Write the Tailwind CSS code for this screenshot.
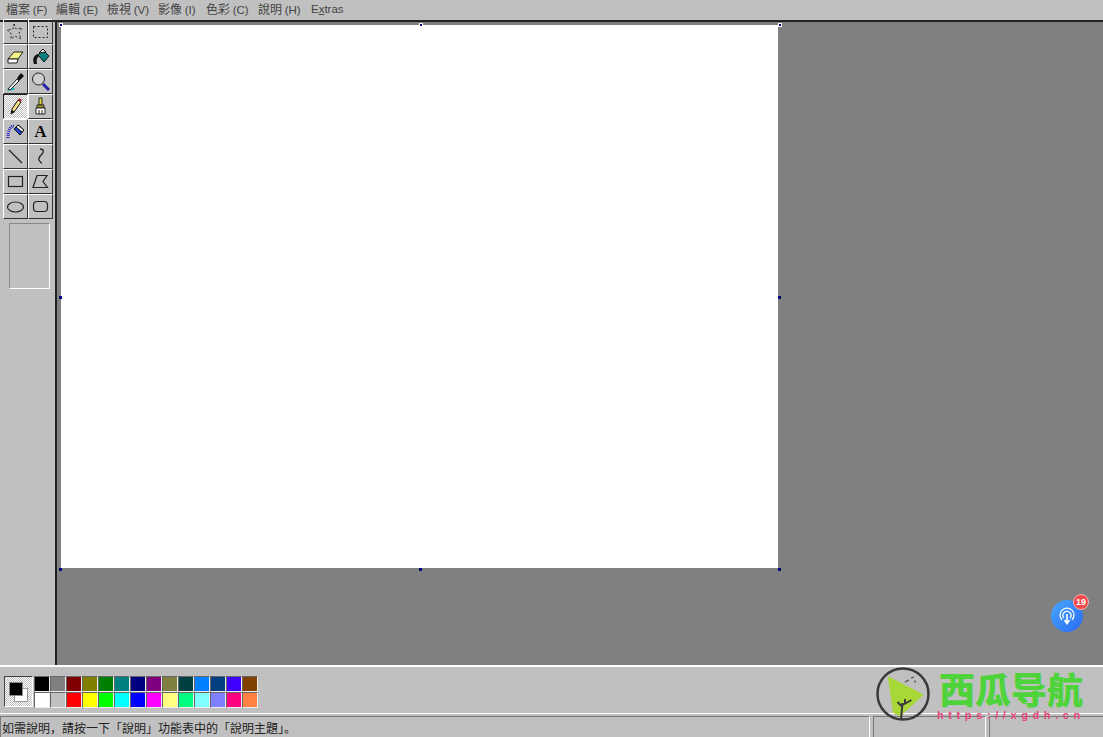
<!DOCTYPE html>
<html lang="zh-Hant">
<head>
<meta charset="utf-8">
<script src="https://cdn.jsdelivr.net/npm/@tailwindcss/browser@4"></script>
</head>
<body class="w-[1103px] h-[737px] overflow-hidden bg-[#c0c0c0] relative font-['Noto_Sans_CJK_TC','Liberation_Sans',sans-serif] text-[12px] text-[#333]">
<div class="flex flex-col h-[737px]">
  <!-- menu -->
  <div class="h-[22px] shrink-0 flex items-start bg-[#c0c0c0] border-b-2 border-[#222] leading-[18px] pl-[6px] text-[#444]">
    <span class="w-[50px]">檔案 <span class="font-['Liberation_Sans',sans-serif] text-[11.500px]">(F)</span></span>
    <span class="w-[51px]">編輯 <span class="font-['Liberation_Sans',sans-serif] text-[11.500px]">(E)</span></span>
    <span class="w-[51px]">檢視 <span class="font-['Liberation_Sans',sans-serif] text-[11.500px]">(V)</span></span>
    <span class="w-[48px]">影像 <span class="font-['Liberation_Sans',sans-serif] text-[11.500px]">(I)</span></span>
    <span class="w-[52px]">色彩 <span class="font-['Liberation_Sans',sans-serif] text-[11.500px]">(C)</span></span>
    <span class="w-[53px]">說明 <span class="font-['Liberation_Sans',sans-serif] text-[11.500px]">(H)</span></span>
    <span class="font-['Liberation_Sans',sans-serif] text-[11.500px]">E<span class="underline">x</span>tras</span>
  </div>
  <!-- main -->
  <div class="flex flex-1 min-h-0">
    <div class="w-[57px] shrink-0 border-r-2 border-[#222] bg-[#c0c0c0] pl-[3px] pt-0">
      <div class="grid grid-cols-[25px_25px] auto-rows-[25px] -mt-[3px]">
        <div class="border border-t-white border-l-white border-r-[#333] border-b-[#333] flex items-center justify-center"><svg width="21" height="21" viewBox="0 0 21 21" fill="none" stroke="#222" stroke-dasharray="2 2"><path d="M9 3l2 5 6-1-3 5 2 6-6-3-4 3 0-6-4-3 6-1z"/></svg></div>
        <div class="border border-t-white border-l-white border-r-[#333] border-b-[#333] flex items-center justify-center"><svg width="21" height="21" viewBox="0 0 21 21" fill="none" stroke="#222" stroke-dasharray="2 2"><rect x="3.500" y="5.500" width="14" height="11"/></svg></div>
        <div class="border border-t-white border-l-white border-r-[#333] border-b-[#333] flex items-center justify-center"><svg width="21" height="21" viewBox="0 0 21 21"><path d="M3 13l6-7h9l-5 7z" fill="#f5f58a" stroke="#222"/><path d="M3 13v4h9l1-4z" fill="#fff" stroke="#222"/></svg></div>
        <div class="border border-t-white border-l-white border-r-[#333] border-b-[#333] flex items-center justify-center"><svg width="21" height="21" viewBox="0 0 21 21"><path d="M4 18c-2-5 0-9 4-10l1 2c-2 2-3 4-2 8z" fill="#111"/><path d="M8 9l5-5 6 6-5 6z" fill="#0a7f80" stroke="#111"/><path d="M9 7l4-4 3 3z" fill="#eee" stroke="#111"/></svg></div>
        <div class="border border-t-white border-l-white border-r-[#333] border-b-[#333] flex items-center justify-center"><svg width="21" height="21" viewBox="0 0 21 21"><path d="M2 19c2-3 6-3 8-1-3 2-6 2-8 1z" fill="#18b5b5"/><path d="M3 18l9-10 2 2-9 9z" fill="#e8f3f3" stroke="#222"/><path d="M12 7l4-5 3 3-5 5z" fill="#111"/></svg></div>
        <div class="border border-t-white border-l-white border-r-[#333] border-b-[#333] flex items-center justify-center"><svg width="21" height="21" viewBox="0 0 21 21"><circle cx="8.500" cy="8" r="6" fill="#cfcfcf" stroke="#222"/><path d="M13 13l6 6" stroke="#2222aa" stroke-width="3"/></svg></div>
        <div class="border border-t-[#222] border-l-[#222] border-r-white border-b-white flex items-center justify-center bg-[repeating-conic-gradient(#fff_0_25%,#c0c0c0_0_50%)] bg-[length:2px_2px]"><svg width="21" height="21" viewBox="0 0 21 21"><path d="M6 18l1-5 6-9 3 2-6 9z" fill="#f5e08a" stroke="#111"/><path d="M13 4l1-2 3 2-1 2z" fill="#b52040"/><path d="M6 18l1-4 3 2z" fill="#111"/></svg></div>
        <div class="border border-t-white border-l-white border-r-[#333] border-b-[#333] flex items-center justify-center"><svg width="21" height="21" viewBox="0 0 21 21"><path d="M9 2h3v7h-3z" fill="#e4d840" stroke="#222"/><path d="M7 9h7v3H7z" fill="#a8a030" stroke="#222"/><path d="M6 12h9v6H6z" fill="#fff" stroke="#222"/><path d="M9 14v4M12 14v4" stroke="#222"/></svg></div>
        <div class="border border-t-white border-l-white border-r-[#333] border-b-[#333] flex items-center justify-center"><svg width="21" height="21" viewBox="0 0 21 21"><path d="M3 17c0-7 2-12 6-12" fill="none" stroke="#2020c0" stroke-width="3" stroke-dasharray="1 1"/><path d="M9 8l4-4 6 5-4 5z" fill="#2040d0" stroke="#111"/><path d="M13 4l6 5-2 2-6-5z" fill="#eee" stroke="#111"/></svg></div>
        <div class="border border-t-white border-l-white border-r-[#333] border-b-[#333] flex items-center justify-center"><span class="font-['Liberation_Serif',serif] font-bold text-[17px] leading-none text-[#111]">A</span></div>
        <div class="border border-t-white border-l-white border-r-[#333] border-b-[#333] flex items-center justify-center"><svg width="21" height="21" viewBox="0 0 21 21"><path d="M4 4l13 13" stroke="#222" stroke-width="1.300"/></svg></div>
        <div class="border border-t-white border-l-white border-r-[#333] border-b-[#333] flex items-center justify-center"><svg width="21" height="21" viewBox="0 0 21 21" fill="none"><path d="M10 3c4 0 4 3 2 5s-4 4-3 6 2 3 3 3" stroke="#222" stroke-width="1.300"/></svg></div>
        <div class="border border-t-white border-l-white border-r-[#333] border-b-[#333] flex items-center justify-center"><svg width="21" height="21" viewBox="0 0 21 21" fill="none"><rect x="3.500" y="5.500" width="14" height="10" stroke="#222" stroke-width="1.200"/></svg></div>
        <div class="border border-t-white border-l-white border-r-[#333] border-b-[#333] flex items-center justify-center"><svg width="21" height="21" viewBox="0 0 21 21" fill="none"><path d="M7 4.500h10l-4 6 4.500 6H3z" stroke="#222" stroke-width="1.200"/></svg></div>
        <div class="border border-t-white border-l-white border-r-[#333] border-b-[#333] flex items-center justify-center"><svg width="21" height="21" viewBox="0 0 21 21" fill="none"><ellipse cx="10.500" cy="11" rx="8" ry="5" stroke="#222" stroke-width="1.200"/></svg></div>
        <div class="border border-t-white border-l-white border-r-[#333] border-b-[#333] flex items-center justify-center"><svg width="21" height="21" viewBox="0 0 21 21" fill="none"><rect x="3.500" y="5.500" width="14" height="10" rx="3.500" stroke="#222" stroke-width="1.200"/></svg></div>
      </div>
      <div class="w-[41px] h-[66px] ml-[6px] mt-[4px] border border-t-[#888] border-l-[#888] border-r-white border-b-white"></div>
    </div>
    <!-- workspace -->
    <div class="flex-1 bg-[#808080] pl-[4px] pt-[3px] relative">
      <div class="w-[717px] h-[543px] bg-white"></div>
      <span class="absolute left-[2px] top-[1px] size-[4px] bg-[#000080] border border-white"></span>
      <span class="absolute left-[362px] top-[1px] size-[4px] bg-[#000080] border border-white"></span>
      <span class="absolute left-[721px] top-[1px] size-[4px] bg-[#000080] border border-white"></span>
      <span class="absolute left-[2px] top-[274px] size-[3px] bg-[#000080]"></span>
      <span class="absolute left-[721px] top-[274px] size-[3px] bg-[#000080]"></span>
      <span class="absolute left-[2px] top-[546px] size-[3px] bg-[#000080]"></span>
      <span class="absolute left-[362px] top-[546px] size-[3px] bg-[#000080]"></span>
      <span class="absolute left-[721px] top-[546px] size-[3px] bg-[#000080]"></span>
      <!-- floating button -->
      <div class="absolute left-[994px] top-[578px] size-[32px] rounded-full bg-gradient-to-br from-[#4aa8ff] to-[#2a68f0] flex items-center justify-center">
        <svg width="20" height="20" viewBox="0 0 20 20" fill="none" stroke="#fff" stroke-width="1.300"><path d="M5 14a7 7 0 1 1 10 0"/><path d="M7 12a4 4 0 1 1 6 0"/><path d="M10 8v9M7.500 14l2.500 3.500 2.500-3.500" stroke-width="1.600"/></svg>
      </div>
      <div class="absolute left-[1016px] top-[572px] size-[16px] rounded-full bg-[#f04a4a] border border-[#f8b0b0] flex items-center justify-center text-white text-[9px] font-bold leading-none font-['Liberation_Sans',sans-serif]">19</div>
    </div>
  </div>
  <!-- palette -->
  <div class="h-[48px] shrink-0 border-t-2 border-white flex items-start pl-[4px] pt-[9px] bg-[#c0c0c0] relative">
    <div class="w-[29px] h-[31px] relative border border-t-[#444] border-l-[#444] border-r-white border-b-white bg-[repeating-conic-gradient(#fff_0_25%,#c0c0c0_0_50%)] bg-[length:2px_2px]">
      <div class="absolute left-[9px] top-[11px] size-[14px] bg-white border border-[#999]"></div>
      <div class="absolute left-[4px] top-[5px] size-[14px] bg-black border border-[#888]"></div>
    </div>
    <div class="grid grid-cols-[repeat(14,16px)] auto-rows-[16px] ml-[1px]">
      <div class="border border-[#eee] border-t-[#666] border-l-[#666] bg-[#000000]"></div>
      <div class="border border-[#eee] border-t-[#666] border-l-[#666] bg-[#808080]"></div>
      <div class="border border-[#eee] border-t-[#666] border-l-[#666] bg-[#800000]"></div>
      <div class="border border-[#eee] border-t-[#666] border-l-[#666] bg-[#808000]"></div>
      <div class="border border-[#eee] border-t-[#666] border-l-[#666] bg-[#008000]"></div>
      <div class="border border-[#eee] border-t-[#666] border-l-[#666] bg-[#008080]"></div>
      <div class="border border-[#eee] border-t-[#666] border-l-[#666] bg-[#000080]"></div>
      <div class="border border-[#eee] border-t-[#666] border-l-[#666] bg-[#800080]"></div>
      <div class="border border-[#eee] border-t-[#666] border-l-[#666] bg-[#808040]"></div>
      <div class="border border-[#eee] border-t-[#666] border-l-[#666] bg-[#004040]"></div>
      <div class="border border-[#eee] border-t-[#666] border-l-[#666] bg-[#0080ff]"></div>
      <div class="border border-[#eee] border-t-[#666] border-l-[#666] bg-[#004080]"></div>
      <div class="border border-[#eee] border-t-[#666] border-l-[#666] bg-[#4000ff]"></div>
      <div class="border border-[#eee] border-t-[#666] border-l-[#666] bg-[#804000]"></div>
      <div class="border border-[#eee] border-t-[#666] border-l-[#666] bg-[#ffffff]"></div>
      <div class="border border-[#eee] border-t-[#666] border-l-[#666] bg-[#c0c0c0]"></div>
      <div class="border border-[#eee] border-t-[#666] border-l-[#666] bg-[#ff0000]"></div>
      <div class="border border-[#eee] border-t-[#666] border-l-[#666] bg-[#ffff00]"></div>
      <div class="border border-[#eee] border-t-[#666] border-l-[#666] bg-[#00ff00]"></div>
      <div class="border border-[#eee] border-t-[#666] border-l-[#666] bg-[#00ffff]"></div>
      <div class="border border-[#eee] border-t-[#666] border-l-[#666] bg-[#0000ff]"></div>
      <div class="border border-[#eee] border-t-[#666] border-l-[#666] bg-[#ff00ff]"></div>
      <div class="border border-[#eee] border-t-[#666] border-l-[#666] bg-[#ffff80]"></div>
      <div class="border border-[#eee] border-t-[#666] border-l-[#666] bg-[#00ff80]"></div>
      <div class="border border-[#eee] border-t-[#666] border-l-[#666] bg-[#80ffff]"></div>
      <div class="border border-[#eee] border-t-[#666] border-l-[#666] bg-[#8080ff]"></div>
      <div class="border border-[#eee] border-t-[#666] border-l-[#666] bg-[#ff0080]"></div>
      <div class="border border-[#eee] border-t-[#666] border-l-[#666] bg-[#ff8040]"></div>
    </div>
  </div>
  <!-- status -->
  <div class="h-[24px] shrink-0 border-t border-white flex pt-[2px] gap-[3px] bg-[#c0c0c0]">
    <div lang="zh-CN" class="w-[870px] border-t border-l border-r border-t-[#777] border-l-[#777] border-r-white pl-[1px] leading-[22px] text-[#222] font-['Noto_Sans_CJK_SC',sans-serif]">如需說明，請按一下「說明」功能表中的「說明主題」。</div>
    <div class="w-[113px] border-t border-l border-r border-t-[#777] border-l-[#777] border-r-white"></div>
    <div class="flex-1 border-t border-l border-t-[#777] border-l-[#777]"></div>
  </div>
</div>
<!-- watermark -->
<div class="absolute left-[875px] top-[666px] w-[228px] h-[60px]">
  <svg class="absolute left-0 top-0" width="58" height="58" viewBox="0 0 58 58" fill="none">
    <circle cx="28" cy="28" r="25.500" stroke="#3a3a3a" stroke-width="2.500"/>
    <path d="M14 12L47 29 25 49 19 46z" fill="#a8d838" stroke="#a8d838" stroke-width="2" stroke-linejoin="round"/>
    <path d="M26 54l1.500-17M27.500 41l-5-5M27.500 39l9-5M30 38v-5" stroke="#3a3a3a" stroke-width="2"/>
    <path d="M30 16l4-2M36 12l3-1M39 16l2-1" stroke="#666" stroke-width="1.500"/>
  </svg>
  <div lang="zh-CN" class="absolute left-[64px] top-[4px] font-['Noto_Sans_CJK_SC',sans-serif] font-black text-[36px] leading-[36px] text-[#4ed43a] whitespace-nowrap">西瓜导航</div>
  <div class="absolute left-[62px] top-[43px] font-['Liberation_Sans',sans-serif] font-bold text-[11px] leading-[13px] tracking-[4.600px] text-[#e8457a] whitespace-nowrap">https://xgdh.cn</div>
</div>
</body>
</html>
